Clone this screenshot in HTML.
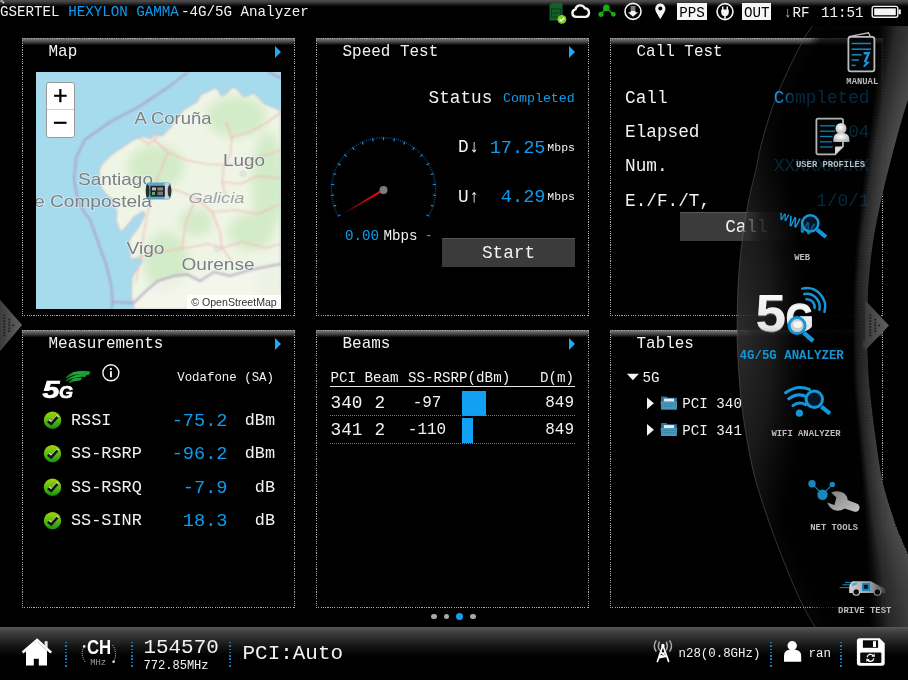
<!DOCTYPE html>
<html lang="en">
<head>
<meta charset="utf-8">
<title>GSERTEL HEXYLON GAMMA - 4G/5G Analyzer</title>
<style>
html,body{margin:0;padding:0;background:#000;}
html{width:908px;height:680px;overflow:hidden;}
body{width:908px;height:680px;position:relative;overflow:hidden;color:#f2f2f2;
  font-family:"Liberation Mono","DejaVu Sans Mono",monospace;font-size:14.19px;}
.t{position:absolute;white-space:pre;line-height:1;}
.b{color:#0d9df0;}
.g{color:#c8c8c8;}
.abs{position:absolute;}
.panel{position:absolute;width:273px;height:278px;
  background:
   repeating-linear-gradient(to right,#aea6a6 0,#aea6a6 0.887px,transparent 0.887px,transparent 1.7734px) 0 0/100% 1px no-repeat,
   repeating-linear-gradient(to right,#aea6a6 0,#aea6a6 0.887px,transparent 0.887px,transparent 1.7734px) 0 100%/100% 1px no-repeat,
   repeating-linear-gradient(to bottom,#aea6a6 0,#aea6a6 0.887px,transparent 0.887px,transparent 1.7734px) 0 0/1px 100% no-repeat,
   repeating-linear-gradient(to bottom,#aea6a6 0,#aea6a6 0.887px,transparent 0.887px,transparent 1.7734px) 100% 0/1px 100% no-repeat,
   linear-gradient(to bottom,#6a6a6a 0,#747474 1px,#5c5c5c 2.5px,#3c3c3c 4.5px,#1a1a1a 6px,#000 7.5px,#000 100%);}
.arr{position:absolute;width:0;height:0;border-left:6.5px solid #1fa9ef;
  border-top:6px solid transparent;border-bottom:6px solid transparent;}
#topbar{position:absolute;left:0;top:0;width:908px;height:23px;
  background:linear-gradient(to bottom,#4e4e4e 0,#444 1.5px,#2a2a2a 3.5px,#0c0c0c 5.5px,#000 7px);}
#botbar{position:absolute;left:0;top:627px;width:908px;height:53px;
  background:linear-gradient(to bottom,#5a5a5a 0,#474747 3px,#363636 8px,#262525 14px,#141313 20px,#060606 26px,#000 31px,#000 100%);}
.vsep{position:absolute;width:1.8px;background:repeating-linear-gradient(to bottom,#1878bc 0,#1878bc 1.5px,transparent 1.5px,transparent 3.3px);}
.btn{position:absolute;background:#3b3b3b;border-top:1px solid #555;box-sizing:border-box;}
.hsepd{position:absolute;height:0;border-top:1px dotted #777;}
.sans{font-family:"Liberation Sans","DejaVu Sans",sans-serif;}
</style>
</head>
<body>
<div id="root" style="position:absolute;left:0;top:0;width:908px;height:680px;overflow:hidden;will-change:transform;transform:translateZ(0);">

<div id="topbar"></div>
<svg class="abs" style="left:0;top:0;" width="8" height="6" viewBox="0 0 8 6"><path d="M0,1.2 H2.6 M2,0 V1.6" stroke="#eee" stroke-width="0.7" fill="none"/><circle cx="3.3" cy="2.5" r="1" fill="#ddd"/></svg>
<div class="t" style="left:0.0px;top:5.0px;font-size:14.19px;">GSERTEL <span class="b">HEXYLON GAMMA</span></div>
<div class="t" style="left:181.0px;top:5.0px;font-size:14.19px;">-</div>
<div class="t" style="left:189.5px;top:5.0px;font-size:14.19px;">4G/5G Analyzer</div>
<div class="panel" style="left:22px;top:38px;"></div>
<div class="t" style="left:48.5px;top:44.5px;font-size:15.96px;">Map</div>
<div class="arr" style="left:275px;top:46px;"></div>
<div class="panel" style="left:316px;top:38px;"></div>
<div class="t" style="left:342.5px;top:44.5px;font-size:15.96px;">Speed Test</div>
<div class="arr" style="left:569px;top:46px;"></div>
<div class="panel" style="left:610px;top:38px;"></div>
<div class="t" style="left:636.5px;top:44.5px;font-size:15.96px;">Call Test</div>
<div class="arr" style="left:863px;top:46px;"></div>
<div class="panel" style="left:22px;top:330px;"></div>
<div class="t" style="left:48.5px;top:336.5px;font-size:15.96px;">Measurements</div>
<div class="arr" style="left:275px;top:338px;"></div>
<div class="panel" style="left:316px;top:330px;"></div>
<div class="t" style="left:342.5px;top:336.5px;font-size:15.96px;">Beams</div>
<div class="arr" style="left:569px;top:338px;"></div>
<div class="panel" style="left:610px;top:330px;"></div>
<div class="t" style="left:636.5px;top:336.5px;font-size:15.96px;">Tables</div>
<div class="arr" style="left:863px;top:338px;"></div>
<div class="abs" style="left:23px;top:39px;width:272px;height:277px;">
  <svg class="abs" style="left:13px;top:33px;" width="245" height="237" viewBox="0 0 245 237">
    <defs>
      <filter id="bl1" x="-5%" y="-5%" width="110%" height="110%"><feGaussianBlur stdDeviation="0.9"/></filter>
      <filter id="bl2" x="-20%" y="-20%" width="140%" height="140%"><feGaussianBlur stdDeviation="5"/></filter>
      <filter id="bl3" x="-5%" y="-20%" width="110%" height="140%"><feGaussianBlur stdDeviation="0.55"/></filter>
      <clipPath id="landclip"><polygon points="245.0,38.6 236.0,35.0 228.0,31.5 222.0,25.0 217.6,21.0 212.0,24.0 207.0,24.5 202.0,18.0 196.4,14.8 191.0,21.0 185.8,24.5 182.0,18.0 178.7,15.7 171.0,20.0 164.6,22.7 161.0,29.8 154.0,34.0 147.0,38.6 140.0,47.0 135.0,55.0 130.0,59.5 126.4,63.9 120.0,62.5 114.0,66.5 107.0,64.5 99.9,66.8 94.0,70.0 88.0,74.2 80.0,79.5 73.4,84.5 67.0,91.0 63.5,97.0 63.0,105.0 64.6,114.0 68.0,120.0 72.0,124.0 76.4,127.0 79.0,134.0 80.8,140.4 80.0,149.0 83.0,156.0 85.0,160.4 91.0,154.0 98.0,145.0 107.4,139.3 109.0,143.0 105.0,150.0 102.5,155.5 96.0,163.6 92.8,170.0 94.0,178.0 94.5,187.9 100.0,186.0 105.8,186.5 106.0,190.0 99.3,199.2 96.0,205.7 95.5,216.0 95.3,225.0 97.7,231.6 98.5,237.0 245.0,237.0"/></clipPath>
    </defs>
    <rect width="245" height="237" fill="#a6dbee"/>
    <g filter="url(#bl1)">
      <polyline points="152.0,0.0 134.0,14.0 104.0,34.0 74.0,50.0 49.0,67.5 40.0,86.0 38.0,108.0 42.0,128.0 48.0,140.0 54.0,147.4 62.0,170.0 70.2,192.7 75.0,212.0 76.7,230.0 97.7,230.8" fill="none" stroke="#a9a9c8" stroke-width="2.2" stroke-linejoin="round"/>
      <polyline points="76.4,229 75.6,237" fill="none" stroke="#a9a9c8" stroke-width="2.2"/>
      <polyline points="245,6 232,0" fill="none" stroke="#a9a9c8" stroke-width="2"/>
      <polygon points="245.0,38.6 236.0,35.0 228.0,31.5 222.0,25.0 217.6,21.0 212.0,24.0 207.0,24.5 202.0,18.0 196.4,14.8 191.0,21.0 185.8,24.5 182.0,18.0 178.7,15.7 171.0,20.0 164.6,22.7 161.0,29.8 154.0,34.0 147.0,38.6 140.0,47.0 135.0,55.0 130.0,59.5 126.4,63.9 120.0,62.5 114.0,66.5 107.0,64.5 99.9,66.8 94.0,70.0 88.0,74.2 80.0,79.5 73.4,84.5 67.0,91.0 63.5,97.0 63.0,105.0 64.6,114.0 68.0,120.0 72.0,124.0 76.4,127.0 79.0,134.0 80.8,140.4 80.0,149.0 83.0,156.0 85.0,160.4 91.0,154.0 98.0,145.0 107.4,139.3 109.0,143.0 105.0,150.0 102.5,155.5 96.0,163.6 92.8,170.0 94.0,178.0 94.5,187.9 100.0,186.0 105.8,186.5 106.0,190.0 99.3,199.2 96.0,205.7 95.5,216.0 95.3,225.0 97.7,231.6 98.5,237.0 245.0,237.0" fill="#eef5e4" stroke="#c9c0d6" stroke-width="1.2"/>
      <g clip-path="url(#landclip)">
        <g filter="url(#bl2)" fill="#d3ebc8">
          <ellipse cx="200" cy="45" rx="30" ry="20"/>
          <ellipse cx="120" cy="95" rx="28" ry="22"/>
          <ellipse cx="232" cy="110" rx="16" ry="50"/>
          <ellipse cx="130" cy="190" rx="22" ry="30"/>
          <ellipse cx="215" cy="160" rx="22" ry="18"/>
          <ellipse cx="160" cy="150" rx="16" ry="14"/>
          <ellipse cx="236" cy="215" rx="14" ry="20"/>
        </g>
        <polygon points="97.7,232.0 110.6,219.6 122.0,209.9 138.1,205.0 151.0,203.4 164.0,210.0 178.0,201.0 194.0,205.0 214.0,199.0 245.0,193.0 245,237 98,237" fill="#f6f4ee" opacity="0.75"/>
        <polyline points="97.7,231.0 110.6,218.6 122.0,208.9 138.1,204.0 151.0,202.4 164.0,209.0 178.0,200.0 194.0,204.0 214.0,198.0 245.0,192.0" fill="none" stroke="#b7a9c4" stroke-width="2"/>
        <g fill="none" stroke="#f3aeb0" stroke-width="1.1" stroke-linejoin="round">
          <polyline points="118,68 132,80 150,88 170,92 188,93 206,92 224,85 245,78"/>
          <polyline points="132,80 124,100 118,116 112,140 108,160 104,185 100,210"/>
          <polyline points="190,50 196,66 194,84 188,93 186,110 190,125"/>
          <polyline points="194,66 214,60 232,50 245,40"/>
          <polyline points="118,116 140,118 160,126 176,140 184,160 186,176 196,190"/>
          <polyline points="186,110 204,112 222,104 245,106"/>
          <polyline points="104,185 124,180 150,176 172,172 186,176 206,170 230,176 245,172"/>
          <polyline points="160,126 150,150 146,176"/>
          <polyline points="176,140 200,138 222,142 245,132"/>
          <polyline points="100,64 112,72 118,68 126,60"/>
        </g>
        <circle cx="207" cy="101.5" r="2.2" fill="#fff" stroke="#9a9a9a" stroke-width="0.8"/>
        <circle cx="181.6" cy="176.8" r="2.2" fill="#fff" stroke="#9a9a9a" stroke-width="0.8"/>
      </g>
    </g>
    <g filter="url(#bl3)" font-family="'Liberation Sans','DejaVu Sans',sans-serif" fill="#7b7f84" stroke="#f4f7f4" stroke-opacity="0.55" stroke-width="1.6" paint-order="stroke" font-size="16.5">
      <text x="98.5" y="52" textLength="77" lengthAdjust="spacingAndGlyphs">A Coruña</text>
      <text x="187" y="94" textLength="42" lengthAdjust="spacingAndGlyphs">Lugo</text>
      <text x="42" y="112.5" textLength="75" lengthAdjust="spacingAndGlyphs">Santiago</text>
      <text x="-2" y="134.5" textLength="118" lengthAdjust="spacingAndGlyphs">e Compostela</text>
      <text x="152.5" y="131" font-style="italic" fill="#a3a3a6" font-size="15" textLength="56" lengthAdjust="spacingAndGlyphs">Galicia</text>
      <text x="90.5" y="181.5" textLength="38" lengthAdjust="spacingAndGlyphs">Vigo</text>
      <text x="145.5" y="198" textLength="73" lengthAdjust="spacingAndGlyphs">Ourense</text>
    </g>
  </svg>

  <div class="abs" style="left:23px;top:42.5px;width:26.6px;height:54.6px;background:#fff;border:1px solid #9b9b9b;border-radius:3px;">
    <div class="abs" style="left:0;top:26.8px;width:26.6px;height:1px;background:#cfcfcf;"></div>
    <div class="abs sans" style="left:0;top:0;width:26.6px;height:27px;text-align:center;font-size:25px;line-height:25px;color:#000;-webkit-text-stroke:0.35px #000;">+</div>
    <div class="abs sans" style="left:0;top:28px;width:26.6px;height:27px;text-align:center;font-size:25px;line-height:23.4px;color:#000;-webkit-text-stroke:0.35px #000;">&#8722;</div>
  </div>
  <div class="abs sans" style="left:164px;top:256px;width:94px;height:14px;background:rgba(255,255,255,0.92);font-size:10.6px;line-height:14px;color:#333;text-align:center;white-space:pre;">&#169; OpenStreetMap</div>
</div>
<div class="t" style="left:428.5px;top:89.8px;font-size:17.73px;">Status</div>
<div class="t b" style="right:333.2px;top:91.7px;font-size:13.3px;">Completed</div>
<div class="t" style="left:458.0px;top:139.3px;font-size:17.73px;">D&#8595;</div>
<div class="t b" style="right:362.5px;top:138.9px;font-size:18.62px;">17.25</div>
<div class="t" style="right:333.0px;top:141.8px;font-size:11.53px;">Mbps</div>
<div class="t" style="left:458.0px;top:188.8px;font-size:17.73px;">U&#8593;</div>
<div class="t b" style="right:362.5px;top:188.4px;font-size:18.62px;">4.29</div>
<div class="t" style="right:333.0px;top:191.2px;font-size:11.53px;">Mbps</div>
<div class="t b" style="left:345.0px;top:228.8px;font-size:14.19px;">0.00</div>
<div class="t" style="left:383.5px;top:228.8px;font-size:14.19px;">Mbps</div>
<div class="t b" style="left:424.5px;top:228.8px;font-size:14.19px;">-</div>
<div class="btn" style="left:442px;top:238px;width:133px;height:29px;"></div>
<div class="t" style="left:358.5px;width:300px;text-align:center;top:244.8px;font-size:17.73px;">Start</div>
<div class="t" style="left:625.0px;top:89.8px;font-size:17.73px;">Call</div>
<div class="t b" style="right:38.5px;top:89.8px;font-size:17.73px;">Completed</div>
<div class="t" style="left:625.0px;top:123.5px;font-size:17.73px;">Elapsed</div>
<div class="t b" style="right:38.5px;top:123.5px;font-size:17.73px;">04</div>
<div class="t" style="left:625.0px;top:157.5px;font-size:17.73px;">Num.</div>
<div class="t b" style="right:38.5px;top:157.5px;font-size:17.73px;">XXXXXXXXX</div>
<div class="t" style="left:625.0px;top:192.8px;font-size:17.73px;">E./F./T,</div>
<div class="t b" style="right:38.5px;top:192.8px;font-size:17.73px;">1/0/1</div>
<div class="btn" style="left:680px;top:212px;width:133px;height:29px;background:linear-gradient(to right,#3b3b3b 0,#3b3b3b 66px,#1a1a1a 96px,#000 120px);border-top:none;"></div><div class="abs" style="left:680px;top:212px;width:70px;height:1px;background:#555;"></div>
<div class="t" style="left:596.5px;width:300px;text-align:center;top:218.8px;font-size:17.73px;">Call</div>
<div class="t" style="right:634.0px;top:372.1px;font-size:12.41px;">Vodafone (SA)</div>
<div class="t" style="left:71.0px;top:412.6px;font-size:16.85px;">RSSI</div>
<div class="t b" style="right:680.5px;top:411.9px;font-size:18.62px;">-75.2</div>
<div class="t" style="right:633.0px;top:412.6px;font-size:16.85px;">dBm</div>
<div class="t" style="left:71.0px;top:446.1px;font-size:16.85px;">SS-RSRP</div>
<div class="t b" style="right:680.5px;top:445.4px;font-size:18.62px;">-96.2</div>
<div class="t" style="right:633.0px;top:446.1px;font-size:16.85px;">dBm</div>
<div class="t" style="left:71.0px;top:479.6px;font-size:16.85px;">SS-RSRQ</div>
<div class="t b" style="right:680.5px;top:478.9px;font-size:18.62px;">-7.9</div>
<div class="t" style="right:633.0px;top:479.6px;font-size:16.85px;">dB</div>
<div class="t" style="left:71.0px;top:513.1px;font-size:16.85px;">SS-SINR</div>
<div class="t b" style="right:680.5px;top:512.4px;font-size:18.62px;">18.3</div>
<div class="t" style="right:633.0px;top:513.1px;font-size:16.85px;">dB</div>
<div class="t" style="left:330.5px;top:371.3px;font-size:14.19px;">PCI Beam</div>
<div class="t" style="left:408.0px;top:371.3px;font-size:14.19px;">SS-RSRP(dBm)</div>
<div class="t" style="right:334.0px;top:371.3px;font-size:14.19px;">D(m)</div>
<div class="abs" style="left:330px;top:386px;width:245px;height:1px;background:#e8e8e8;"></div>
<div class="t" style="left:330.5px;top:394.8px;font-size:17.73px;">340</div>
<div class="t" style="left:374.5px;top:394.8px;font-size:17.73px;">2</div>
<div class="t" style="left:277.0px;width:300px;text-align:center;top:395.5px;font-size:15.96px;">-97</div>
<div class="abs" style="left:462px;top:390.5px;width:24px;height:25.5px;background:#12a1f2;"></div>
<div class="t" style="right:334.0px;top:395.5px;font-size:15.96px;">849</div>
<div class="hsepd" style="left:330px;top:415.0px;width:245px;"></div>
<div class="t" style="left:330.5px;top:421.8px;font-size:17.73px;">341</div>
<div class="t" style="left:374.5px;top:421.8px;font-size:17.73px;">2</div>
<div class="t" style="left:277.0px;width:300px;text-align:center;top:422.5px;font-size:15.96px;">-110</div>
<div class="abs" style="left:462px;top:417.5px;width:11px;height:25.5px;background:#12a1f2;"></div>
<div class="t" style="right:334.0px;top:422.5px;font-size:15.96px;">849</div>
<div class="hsepd" style="left:330px;top:442.5px;width:245px;"></div>
<div class="t" style="left:642.5px;top:370.8px;font-size:14.19px;">5G</div>
<div class="t" style="left:682.3px;top:397.1px;font-size:14.19px;">PCI 340</div>
<div class="t" style="left:682.3px;top:423.6px;font-size:14.19px;">PCI 341</div>
<div class="abs" style="left:431.4px;top:613.6999999999999px;width:5.2px;height:5.2px;border-radius:50%;background:#a8a8a8;"></div>
<div class="abs" style="left:443.9px;top:613.6999999999999px;width:5.2px;height:5.2px;border-radius:50%;background:#a8a8a8;"></div>
<div class="abs" style="left:456.1px;top:612.8px;width:7.0px;height:7.0px;border-radius:50%;background:#12a1f2;"></div>
<div class="abs" style="left:470.4px;top:613.6999999999999px;width:5.2px;height:5.2px;border-radius:50%;background:#a8a8a8;"></div>
<div id="botbar"></div>
<div class="vsep" style="left:65.3px;top:641.5px;height:25.5px;"></div>
<div class="vsep" style="left:131px;top:641.5px;height:25.5px;"></div>
<div class="vsep" style="left:229.4px;top:641.5px;height:25.5px;"></div>
<div class="vsep" style="left:770px;top:641.5px;height:25.5px;"></div>
<div class="vsep" style="left:840px;top:641.5px;height:25.5px;"></div>
<div class="t" style="left:143.5px;top:638.3px;font-size:20.9px;">154570</div>
<div class="t" style="left:143.5px;top:660.3px;font-size:12.06px;">772.85MHz</div>
<div class="t" style="left:242.5px;top:643.8px;font-size:20.95px;">PCI:Auto</div>
<div class="t" style="left:678.5px;top:647.6px;font-size:12.41px;">n28(0.8GHz)</div>
<div class="t" style="left:808.5px;top:647.6px;font-size:12.41px;">ran</div>
<svg class="abs" style="left:0;top:0;" width="908" height="680" viewBox="0 0 908 680"><line x1="340.5" y1="214.8" x2="337.7" y2="216.3" stroke="#1189dc" stroke-width="1.3"/>
<line x1="338.0" y1="213.7" x2="336.6" y2="214.4" stroke="#105a92" stroke-width="0.8"/>
<line x1="337.1" y1="211.7" x2="335.6" y2="212.4" stroke="#105a92" stroke-width="0.8"/>
<line x1="336.2" y1="209.8" x2="334.7" y2="210.4" stroke="#105a92" stroke-width="0.8"/>
<line x1="335.4" y1="207.8" x2="333.9" y2="208.3" stroke="#105a92" stroke-width="0.8"/>
<line x1="336.2" y1="205.3" x2="333.2" y2="206.2" stroke="#1189dc" stroke-width="1.3"/>
<line x1="334.1" y1="203.7" x2="332.5" y2="204.1" stroke="#105a92" stroke-width="0.8"/>
<line x1="333.6" y1="201.6" x2="332.0" y2="202.0" stroke="#105a92" stroke-width="0.8"/>
<line x1="333.1" y1="199.5" x2="331.5" y2="199.8" stroke="#105a92" stroke-width="0.8"/>
<line x1="332.8" y1="197.4" x2="331.2" y2="197.6" stroke="#105a92" stroke-width="0.8"/>
<line x1="334.1" y1="195.1" x2="330.9" y2="195.4" stroke="#1189dc" stroke-width="1.3"/>
<line x1="332.3" y1="193.1" x2="330.7" y2="193.2" stroke="#105a92" stroke-width="0.8"/>
<line x1="332.2" y1="191.0" x2="330.6" y2="191.0" stroke="#105a92" stroke-width="0.8"/>
<line x1="332.2" y1="188.8" x2="330.6" y2="188.8" stroke="#105a92" stroke-width="0.8"/>
<line x1="332.3" y1="186.7" x2="330.7" y2="186.6" stroke="#105a92" stroke-width="0.8"/>
<line x1="334.1" y1="184.7" x2="330.9" y2="184.4" stroke="#1189dc" stroke-width="1.3"/>
<line x1="332.8" y1="182.4" x2="331.2" y2="182.2" stroke="#105a92" stroke-width="0.8"/>
<line x1="333.1" y1="180.3" x2="331.5" y2="180.0" stroke="#105a92" stroke-width="0.8"/>
<line x1="333.6" y1="178.2" x2="332.0" y2="177.8" stroke="#105a92" stroke-width="0.8"/>
<line x1="334.1" y1="176.1" x2="332.5" y2="175.7" stroke="#105a92" stroke-width="0.8"/>
<line x1="336.2" y1="174.5" x2="333.2" y2="173.6" stroke="#1189dc" stroke-width="1.3"/>
<line x1="335.4" y1="172.0" x2="333.9" y2="171.5" stroke="#105a92" stroke-width="0.8"/>
<line x1="336.2" y1="170.0" x2="334.7" y2="169.4" stroke="#105a92" stroke-width="0.8"/>
<line x1="337.1" y1="168.1" x2="335.6" y2="167.4" stroke="#105a92" stroke-width="0.8"/>
<line x1="338.0" y1="166.1" x2="336.6" y2="165.4" stroke="#105a92" stroke-width="0.8"/>
<line x1="340.5" y1="165.1" x2="337.7" y2="163.4" stroke="#1189dc" stroke-width="1.3"/>
<line x1="340.2" y1="162.4" x2="338.8" y2="161.6" stroke="#105a92" stroke-width="0.8"/>
<line x1="341.4" y1="160.6" x2="340.1" y2="159.7" stroke="#105a92" stroke-width="0.8"/>
<line x1="342.6" y1="158.9" x2="341.4" y2="157.9" stroke="#105a92" stroke-width="0.8"/>
<line x1="344.0" y1="157.2" x2="342.7" y2="156.2" stroke="#105a92" stroke-width="0.8"/>
<line x1="346.6" y1="156.6" x2="344.2" y2="154.5" stroke="#1189dc" stroke-width="1.3"/>
<line x1="346.8" y1="154.0" x2="345.7" y2="152.9" stroke="#105a92" stroke-width="0.8"/>
<line x1="348.4" y1="152.5" x2="347.3" y2="151.3" stroke="#105a92" stroke-width="0.8"/>
<line x1="350.0" y1="151.1" x2="348.9" y2="149.9" stroke="#105a92" stroke-width="0.8"/>
<line x1="351.6" y1="149.7" x2="350.6" y2="148.4" stroke="#105a92" stroke-width="0.8"/>
<line x1="354.3" y1="149.7" x2="352.4" y2="147.1" stroke="#1189dc" stroke-width="1.3"/>
<line x1="355.1" y1="147.2" x2="354.2" y2="145.8" stroke="#105a92" stroke-width="0.8"/>
<line x1="356.9" y1="146.0" x2="356.1" y2="144.7" stroke="#105a92" stroke-width="0.8"/>
<line x1="358.8" y1="144.9" x2="358.0" y2="143.5" stroke="#105a92" stroke-width="0.8"/>
<line x1="360.7" y1="143.9" x2="360.0" y2="142.5" stroke="#105a92" stroke-width="0.8"/>
<line x1="363.3" y1="144.5" x2="362.0" y2="141.6" stroke="#1189dc" stroke-width="1.3"/>
<line x1="364.6" y1="142.2" x2="364.0" y2="140.7" stroke="#105a92" stroke-width="0.8"/>
<line x1="366.6" y1="141.5" x2="366.1" y2="139.9" stroke="#105a92" stroke-width="0.8"/>
<line x1="368.7" y1="140.8" x2="368.2" y2="139.3" stroke="#105a92" stroke-width="0.8"/>
<line x1="370.7" y1="140.2" x2="370.3" y2="138.7" stroke="#105a92" stroke-width="0.8"/>
<line x1="373.2" y1="141.3" x2="372.5" y2="138.2" stroke="#1189dc" stroke-width="1.3"/>
<line x1="374.9" y1="139.3" x2="374.7" y2="137.7" stroke="#105a92" stroke-width="0.8"/>
<line x1="377.1" y1="139.0" x2="376.9" y2="137.4" stroke="#105a92" stroke-width="0.8"/>
<line x1="379.2" y1="138.8" x2="379.1" y2="137.2" stroke="#105a92" stroke-width="0.8"/>
<line x1="381.4" y1="138.6" x2="381.3" y2="137.0" stroke="#105a92" stroke-width="0.8"/>
<line x1="383.5" y1="140.2" x2="383.5" y2="137.0" stroke="#1189dc" stroke-width="1.3"/>
<line x1="385.6" y1="138.6" x2="385.7" y2="137.0" stroke="#105a92" stroke-width="0.8"/>
<line x1="387.8" y1="138.8" x2="387.9" y2="137.2" stroke="#105a92" stroke-width="0.8"/>
<line x1="389.9" y1="139.0" x2="390.1" y2="137.4" stroke="#105a92" stroke-width="0.8"/>
<line x1="392.1" y1="139.3" x2="392.3" y2="137.7" stroke="#105a92" stroke-width="0.8"/>
<line x1="393.8" y1="141.3" x2="394.5" y2="138.2" stroke="#1189dc" stroke-width="1.3"/>
<line x1="396.3" y1="140.2" x2="396.7" y2="138.7" stroke="#105a92" stroke-width="0.8"/>
<line x1="398.3" y1="140.8" x2="398.8" y2="139.3" stroke="#105a92" stroke-width="0.8"/>
<line x1="400.4" y1="141.5" x2="400.9" y2="139.9" stroke="#105a92" stroke-width="0.8"/>
<line x1="402.4" y1="142.2" x2="403.0" y2="140.7" stroke="#105a92" stroke-width="0.8"/>
<line x1="403.7" y1="144.5" x2="405.0" y2="141.6" stroke="#1189dc" stroke-width="1.3"/>
<line x1="406.3" y1="143.9" x2="407.0" y2="142.5" stroke="#105a92" stroke-width="0.8"/>
<line x1="408.2" y1="144.9" x2="409.0" y2="143.5" stroke="#105a92" stroke-width="0.8"/>
<line x1="410.1" y1="146.0" x2="410.9" y2="144.7" stroke="#105a92" stroke-width="0.8"/>
<line x1="411.9" y1="147.2" x2="412.8" y2="145.8" stroke="#105a92" stroke-width="0.8"/>
<line x1="412.7" y1="149.7" x2="414.6" y2="147.1" stroke="#1189dc" stroke-width="1.3"/>
<line x1="415.4" y1="149.7" x2="416.4" y2="148.4" stroke="#105a92" stroke-width="0.8"/>
<line x1="417.0" y1="151.1" x2="418.1" y2="149.9" stroke="#105a92" stroke-width="0.8"/>
<line x1="418.6" y1="152.5" x2="419.7" y2="151.3" stroke="#105a92" stroke-width="0.8"/>
<line x1="420.2" y1="154.0" x2="421.3" y2="152.9" stroke="#105a92" stroke-width="0.8"/>
<line x1="420.4" y1="156.6" x2="422.8" y2="154.5" stroke="#1189dc" stroke-width="1.3"/>
<line x1="423.0" y1="157.2" x2="424.3" y2="156.2" stroke="#105a92" stroke-width="0.8"/>
<line x1="424.4" y1="158.9" x2="425.6" y2="157.9" stroke="#105a92" stroke-width="0.8"/>
<line x1="425.6" y1="160.6" x2="426.9" y2="159.7" stroke="#105a92" stroke-width="0.8"/>
<line x1="426.8" y1="162.4" x2="428.2" y2="161.6" stroke="#105a92" stroke-width="0.8"/>
<line x1="426.5" y1="165.0" x2="429.3" y2="163.4" stroke="#1189dc" stroke-width="1.3"/>
<line x1="429.0" y1="166.1" x2="430.4" y2="165.4" stroke="#105a92" stroke-width="0.8"/>
<line x1="429.9" y1="168.1" x2="431.4" y2="167.4" stroke="#105a92" stroke-width="0.8"/>
<line x1="430.8" y1="170.0" x2="432.3" y2="169.4" stroke="#105a92" stroke-width="0.8"/>
<line x1="431.6" y1="172.0" x2="433.1" y2="171.5" stroke="#105a92" stroke-width="0.8"/>
<line x1="430.8" y1="174.5" x2="433.8" y2="173.6" stroke="#1189dc" stroke-width="1.3"/>
<line x1="432.9" y1="176.1" x2="434.5" y2="175.7" stroke="#105a92" stroke-width="0.8"/>
<line x1="433.4" y1="178.2" x2="435.0" y2="177.8" stroke="#105a92" stroke-width="0.8"/>
<line x1="433.9" y1="180.3" x2="435.5" y2="180.0" stroke="#105a92" stroke-width="0.8"/>
<line x1="434.2" y1="182.4" x2="435.8" y2="182.2" stroke="#105a92" stroke-width="0.8"/>
<line x1="432.9" y1="184.7" x2="436.1" y2="184.4" stroke="#1189dc" stroke-width="1.3"/>
<line x1="434.7" y1="186.7" x2="436.3" y2="186.6" stroke="#105a92" stroke-width="0.8"/>
<line x1="434.8" y1="188.8" x2="436.4" y2="188.8" stroke="#105a92" stroke-width="0.8"/>
<line x1="434.8" y1="191.0" x2="436.4" y2="191.0" stroke="#105a92" stroke-width="0.8"/>
<line x1="434.7" y1="193.1" x2="436.3" y2="193.2" stroke="#105a92" stroke-width="0.8"/>
<line x1="432.9" y1="195.1" x2="436.1" y2="195.4" stroke="#1189dc" stroke-width="1.3"/>
<line x1="434.2" y1="197.4" x2="435.8" y2="197.6" stroke="#105a92" stroke-width="0.8"/>
<line x1="433.9" y1="199.5" x2="435.5" y2="199.8" stroke="#105a92" stroke-width="0.8"/>
<line x1="433.4" y1="201.6" x2="435.0" y2="202.0" stroke="#105a92" stroke-width="0.8"/>
<line x1="432.9" y1="203.7" x2="434.5" y2="204.1" stroke="#105a92" stroke-width="0.8"/>
<line x1="430.8" y1="205.3" x2="433.8" y2="206.2" stroke="#1189dc" stroke-width="1.3"/>
<line x1="431.6" y1="207.8" x2="433.1" y2="208.3" stroke="#105a92" stroke-width="0.8"/>
<line x1="430.8" y1="209.8" x2="432.3" y2="210.4" stroke="#105a92" stroke-width="0.8"/>
<line x1="429.9" y1="211.7" x2="431.4" y2="212.4" stroke="#105a92" stroke-width="0.8"/>
<line x1="429.0" y1="213.7" x2="430.4" y2="214.4" stroke="#105a92" stroke-width="0.8"/>
<line x1="426.5" y1="214.8" x2="429.3" y2="216.3" stroke="#1189dc" stroke-width="1.3"/>
<polygon points="343.1,213.7 382.8,188.8 384.2,191.0" fill="#d40d0d"/>
<circle cx="383.5" cy="189.9" r="4" fill="#7c7c7c"/>
<!-- sim -->
<path d="M549.5,5 L552.5,2.8 H562.5 V20.6 H549.5 Z" fill="#15602a"/>
<rect x="551.5" y="9" width="9" height="8" fill="none" stroke="#0c3a18" stroke-width="1"/>
<line x1="551.5" y1="13" x2="560.5" y2="13" stroke="#0c3a18" stroke-width="1"/>
<circle cx="561.9" cy="19.3" r="4.4" fill="#7ed321"/>
<polyline points="559.6,19.3 561.3,21 564.3,17.6" fill="none" stroke="#fff" stroke-width="1.4"/>
<!-- cloud -->
<path d="M576,16.9 a3.8,3.8 0 0 1 -0.6,-7.5 a5,5 0 0 1 9.4,-1.2 a4.4,4.4 0 0 1 0.7,8.7 Z" fill="#000" stroke="#f4f4f4" stroke-width="2.4" stroke-linejoin="round"/>
<!-- nodes -->
<g stroke="#17ad17" stroke-width="1.4" fill="#17ad17">
<line x1="606.3" y1="7.9" x2="601" y2="14.3"/><line x1="606.3" y1="7.9" x2="613.4" y2="14.3"/>
<circle cx="606.3" cy="7.9" r="2.6"/><circle cx="601" cy="14.3" r="1.9"/><circle cx="613.4" cy="14.3" r="1.7"/></g>
<!-- download -->
<circle cx="633" cy="11.4" r="8" fill="none" stroke="#f4f4f4" stroke-width="1.6"/>
<path d="M630.6,6.4 h4.8 v1.2 h-4.8 z M630.6,8.4 h4.8 v1.2 h-4.8 z M630.6,10.4 h4.8 v1.8 h2.6 l-5,4.6 l-5,-4.6 h2.6 z" fill="#f4f4f4"/>
<!-- pin -->
<path d="M660.3,19.3 C658,15 655.2,12 655.2,8.6 a5.1,5.1 0 0 1 10.2,0 C665.4,12 662.6,15 660.3,19.3 Z" fill="#f4f4f4"/>
<circle cx="660.3" cy="8.5" r="2" fill="#000"/>
<!-- plug -->
<circle cx="725" cy="11.6" r="8" fill="none" stroke="#f4f4f4" stroke-width="1.6"/>
<path d="M722,6.5 h1.5 v3 h3 v-3 h1.5 v3 h0.8 v3 a3.8,3.8 0 0 1 -3,3.6 v2.6 h-1.6 v-2.6 a3.8,3.8 0 0 1 -3,-3.6 v-3 h0.8 z" fill="#f4f4f4"/>
<!-- battery -->
<rect x="872.2" y="6.4" width="25.6" height="10.8" rx="2" fill="none" stroke="#f4f4f4" stroke-width="1.4"/>
<rect x="874.2" y="8.4" width="21.6" height="6.8" fill="#f4f4f4"/>
<rect x="898.6" y="9.4" width="2.2" height="4.8" fill="#f4f4f4"/>

<defs><linearGradient id="gck" x1="0" y1="0" x2="0" y2="1"><stop offset="0" stop-color="#a4d400"/><stop offset="0.5" stop-color="#5cba10"/><stop offset="1" stop-color="#149018"/></linearGradient>
<linearGradient id="ggr" x1="0" y1="1" x2="1" y2="0"><stop offset="0" stop-color="#0a5a10"/><stop offset="0.55" stop-color="#1fae3a"/><stop offset="1" stop-color="#10962a"/></linearGradient></defs>
<text x="42.6" y="397.8" font-family="'Liberation Sans','DejaVu Sans',sans-serif" font-weight="bold" font-style="italic" font-size="24.6" fill="#fff" stroke="#fff" stroke-width="0.7" textLength="17" lengthAdjust="spacingAndGlyphs">5</text>
<text x="59" y="397.8" font-family="'Liberation Sans','DejaVu Sans',sans-serif" font-weight="bold" font-style="italic" font-size="17" fill="#fff" stroke="#fff" stroke-width="0.7" textLength="14" lengthAdjust="spacingAndGlyphs">G</text>
<path d="M65.8,377 Q75,368.4 90.6,371.6 L88.6,375.2 Q76,372 66.6,378.4 Z" fill="url(#ggr)"/>
<path d="M65.4,380.4 Q75.5,372.6 87.4,373.8 L85.4,377 Q76,376 66.2,381.6 Z" fill="url(#ggr)"/>
<path d="M68.6,382 Q74.6,376.6 82.4,377.8 L80.4,380.6 Q75,380 69.6,383.2 Z" fill="url(#ggr)"/>
<circle cx="110.9" cy="372.8" r="8" fill="none" stroke="#f4f4f4" stroke-width="1.4"/>
<circle cx="110.9" cy="368.9" r="1.15" fill="#f4f4f4"/>
<rect x="110" y="371.2" width="1.9" height="6" fill="#f4f4f4"/>
<circle cx="52.5" cy="420.2" r="8.7" fill="url(#gck)"/>
<polyline points="48.6,420.4 51.7,422.9 57.8,415.9" fill="none" stroke="#f4f4f4" stroke-width="2.6" stroke-linejoin="round"/>
<polyline points="47.9,421.2 51.3,423.9 57.5,416.9" fill="none" stroke="#111" stroke-width="2.6" stroke-linejoin="round"/>
<circle cx="52.5" cy="453.7" r="8.7" fill="url(#gck)"/>
<polyline points="48.6,453.9 51.7,456.4 57.8,449.4" fill="none" stroke="#f4f4f4" stroke-width="2.6" stroke-linejoin="round"/>
<polyline points="47.9,454.7 51.3,457.4 57.5,450.4" fill="none" stroke="#111" stroke-width="2.6" stroke-linejoin="round"/>
<circle cx="52.5" cy="487.2" r="8.7" fill="url(#gck)"/>
<polyline points="48.6,487.4 51.7,489.9 57.8,482.9" fill="none" stroke="#f4f4f4" stroke-width="2.6" stroke-linejoin="round"/>
<polyline points="47.9,488.2 51.3,490.9 57.5,483.9" fill="none" stroke="#111" stroke-width="2.6" stroke-linejoin="round"/>
<circle cx="52.5" cy="520.7" r="8.7" fill="url(#gck)"/>
<polyline points="48.6,520.9000000000001 51.7,523.4000000000001 57.8,516.4000000000001" fill="none" stroke="#f4f4f4" stroke-width="2.6" stroke-linejoin="round"/>
<polyline points="47.9,521.7 51.3,524.4000000000001 57.5,517.4000000000001" fill="none" stroke="#111" stroke-width="2.6" stroke-linejoin="round"/>
<polygon points="626.9,373.8 638.9,373.8 632.9,380.2" fill="#f4f4f4"/>
<polygon points="647,397.4 653.9,403.3 647,409.2" fill="#f4f4f4"/>
<polygon points="647,423.9 653.9,429.8 647,435.7" fill="#f4f4f4"/>
<path d="M661.1,396.4 h5.4 l1.4,1.4 h9 v11.6 h-15.8 z" fill="#2f7496"/>
<rect x="663.9000000000001" y="398.6" width="10.2" height="3.2" fill="#e4eef2"/>
<path d="M660.6,401.6 h16.6 l-0.6,7.9 h-15.4 z" fill="#4a97bb"/>
<path d="M661.7,403.8 h14.4 M661.9000000000001,406.2 h14" stroke="#2f7496" stroke-width="0.9" stroke-dasharray="1.2 1"/>
<path d="M661.1,422.9 h5.4 l1.4,1.4 h9 v11.6 h-15.8 z" fill="#2f7496"/>
<rect x="663.9000000000001" y="425.1" width="10.2" height="3.2" fill="#e4eef2"/>
<path d="M660.6,428.1 h16.6 l-0.6,7.9 h-15.4 z" fill="#4a97bb"/>
<path d="M661.7,430.3 h14.4 M661.9000000000001,432.7 h14" stroke="#2f7496" stroke-width="0.9" stroke-dasharray="1.2 1"/>

<rect x="146.2" y="182.4" width="24.6" height="17" rx="3" fill="#5aa6c6"/>
<rect x="164.5" y="183" width="4.6" height="15.8" fill="#c9d2d6"/>
<ellipse cx="147.6" cy="191" rx="1.9" ry="6.6" fill="#2b2b2b"/>
<ellipse cx="169.6" cy="191" rx="1.9" ry="6" fill="#333"/>
<rect x="150.4" y="185.8" width="14.4" height="10.8" fill="#1e2022"/>
<rect x="152" y="187.4" width="4" height="3" fill="#bbb"/><rect x="157.4" y="187.4" width="5.6" height="3" fill="#8a8a8a"/>
<rect x="152" y="192" width="3" height="3" fill="#6a6"/><rect x="157.4" y="191.6" width="5.6" height="3.6" fill="#777"/>
</svg>
<div class="abs" style="left:677.3px;top:2.8px;width:29.4px;height:17.6px;background:#f6f6f6;"></div>
<div class="t" style="left:542.0px;width:300px;text-align:center;top:5.6px;font-size:14.19px;color:#000;">PPS</div>
<div class="abs" style="left:742px;top:2.8px;width:29.4px;height:17.6px;background:#f6f6f6;"></div>
<div class="t" style="left:606.7px;width:300px;text-align:center;top:5.6px;font-size:14.19px;color:#000;">OUT</div>
<div class="t" style="left:783.6px;top:5.6px;font-size:14.19px;color:#b8b8b8;">&#8595;</div>
<div class="t" style="left:792.6px;top:5.6px;font-size:14.19px;">RF</div>
<div class="t" style="left:821.0px;top:5.6px;font-size:14.19px;">11:51</div>

<svg class="abs" style="left:0;top:0;" width="908" height="680" viewBox="0 0 908 680">
<defs>
  <clipPath id="dockclip"><path d="M812.3,26.0 C810.8,28.3 807.5,32.2 803.4,39.8 C799.3,47.4 792.3,61.3 787.5,71.6 C782.7,81.8 778.1,92.4 774.6,101.3 C771.1,110.2 769.2,116.8 766.7,125.1 C764.2,133.4 761.5,143.5 759.7,150.9 C757.9,158.3 757.8,161.4 756.0,169.4 C754.2,177.4 751.0,189.0 749.0,198.8 C747.0,208.6 745.5,218.2 744.0,228.0 C742.5,237.8 741.2,247.8 740.2,257.6 C739.2,267.4 738.5,277.2 738.0,287.0 C737.5,296.8 737.3,306.8 737.2,316.5 C737.1,326.2 737.0,335.2 737.3,345.0 C737.6,354.8 738.3,365.3 739.0,375.0 C739.7,384.7 740.2,392.2 741.5,403.0 C742.8,413.8 744.6,427.2 747.0,440.0 C749.4,452.8 751.4,464.9 755.6,480.0 C759.8,495.1 766.0,513.8 772.1,530.7 C778.2,547.6 786.7,568.6 792.0,581.5 C797.3,594.4 800.3,600.4 804.1,608.0 C807.9,615.6 813.2,623.8 815.0,627.0 L925,627 L925,590 C922.2,583.8 912.9,563.8 908.0,552.8 C903.1,541.8 900.0,536.1 895.7,524.0 C891.4,511.9 886.0,496.5 882.4,480.0 C878.8,463.5 876.2,441.7 874.0,425.0 C871.8,408.3 870.1,395.0 869.0,380.0 C867.9,365.0 867.3,350.9 867.2,335.0 C867.1,319.1 867.5,300.4 868.5,284.7 C869.5,269.0 871.0,255.3 873.3,240.6 C875.5,225.9 878.7,211.3 882.0,196.5 C885.3,181.7 888.7,168.1 893.0,152.0 C897.3,135.9 902.7,115.3 908.0,100.0 C913.3,84.7 922.2,66.7 925.0,60.0 L925,26 Z"/></clipPath>
  <filter id="dbl" x="-20%" y="-10%" width="140%" height="120%"><feGaussianBlur stdDeviation="7"/></filter>
  <filter id="dbl3" x="-20%" y="-10%" width="140%" height="120%"><feGaussianBlur stdDeviation="3.5"/></filter>
  <filter id="dbl2" x="-20%" y="-10%" width="140%" height="120%"><feGaussianBlur stdDeviation="5"/></filter>
  <linearGradient id="dgb" x1="0" y1="0" x2="1" y2="0"><stop offset="0" stop-color="#222" stop-opacity="0"/><stop offset="0.3" stop-color="#323232" stop-opacity="0.8"/><stop offset="0.6" stop-color="#404040" stop-opacity="0.92"/><stop offset="1" stop-color="#505050" stop-opacity="0.95"/></linearGradient>
  <radialGradient id="dsh" cx="0.5" cy="0.5" r="0.5"><stop offset="0" stop-color="#323030" stop-opacity="0.85"/><stop offset="0.5" stop-color="#2a2828" stop-opacity="0.6"/><stop offset="1" stop-color="#1a1a1a" stop-opacity="0"/></radialGradient>
  <linearGradient id="dpatch" gradientUnits="userSpaceOnUse" x1="760" y1="0" x2="806" y2="0"><stop offset="0" stop-color="#000" stop-opacity="0"/><stop offset="1" stop-color="#000" stop-opacity="0.8"/></linearGradient>
  <linearGradient id="dgr" gradientUnits="userSpaceOnUse" x1="846" y1="0" x2="908" y2="0">
    <stop offset="0" stop-color="#000" stop-opacity="0"/><stop offset="0.35" stop-color="#1c1c1c" stop-opacity="0.9"/><stop offset="1" stop-color="#484848" stop-opacity="1"/>
  </linearGradient>
</defs>
<g clip-path="url(#dockclip)">
  <path d="M812.3,26.0 C810.8,28.3 807.5,32.2 803.4,39.8 C799.3,47.4 792.3,61.3 787.5,71.6 C782.7,81.8 778.1,92.4 774.6,101.3 C771.1,110.2 769.2,116.8 766.7,125.1 C764.2,133.4 761.5,143.5 759.7,150.9 C757.9,158.3 757.8,161.4 756.0,169.4 C754.2,177.4 751.0,189.0 749.0,198.8 C747.0,208.6 745.5,218.2 744.0,228.0 C742.5,237.8 741.2,247.8 740.2,257.6 C739.2,267.4 738.5,277.2 738.0,287.0 C737.5,296.8 737.3,306.8 737.2,316.5 C737.1,326.2 737.0,335.2 737.3,345.0 C737.6,354.8 738.3,365.3 739.0,375.0 C739.7,384.7 740.2,392.2 741.5,403.0 C742.8,413.8 744.6,427.2 747.0,440.0 C749.4,452.8 751.4,464.9 755.6,480.0 C759.8,495.1 766.0,513.8 772.1,530.7 C778.2,547.6 786.7,568.6 792.0,581.5 C797.3,594.4 800.3,600.4 804.1,608.0 C807.9,615.6 813.2,623.8 815.0,627.0 L925,627 L925,590 C922.2,583.8 912.9,563.8 908.0,552.8 C903.1,541.8 900.0,536.1 895.7,524.0 C891.4,511.9 886.0,496.5 882.4,480.0 C878.8,463.5 876.2,441.7 874.0,425.0 C871.8,408.3 870.1,395.0 869.0,380.0 C867.9,365.0 867.3,350.9 867.2,335.0 C867.1,319.1 867.5,300.4 868.5,284.7 C869.5,269.0 871.0,255.3 873.3,240.6 C875.5,225.9 878.7,211.3 882.0,196.5 C885.3,181.7 888.7,168.1 893.0,152.0 C897.3,135.9 902.7,115.3 908.0,100.0 C913.3,84.7 922.2,66.7 925.0,60.0 L925,26 Z" fill="#2a2a2a" fill-opacity="0.10"/>
  <path d="M812.3,26.0 C810.8,28.3 807.5,32.2 803.4,39.8 C799.3,47.4 792.3,61.3 787.5,71.6 C782.7,81.8 778.1,92.4 774.6,101.3 C771.1,110.2 769.2,116.8 766.7,125.1 C764.2,133.4 761.5,143.5 759.7,150.9 C757.9,158.3 757.8,161.4 756.0,169.4 C754.2,177.4 751.0,189.0 749.0,198.8 C747.0,208.6 745.5,218.2 744.0,228.0 C742.5,237.8 741.2,247.8 740.2,257.6 C739.2,267.4 738.5,277.2 738.0,287.0 C737.5,296.8 737.3,306.8 737.2,316.5 C737.1,326.2 737.0,335.2 737.3,345.0 C737.6,354.8 738.3,365.3 739.0,375.0 C739.7,384.7 740.2,392.2 741.5,403.0 C742.8,413.8 744.6,427.2 747.0,440.0 C749.4,452.8 751.4,464.9 755.6,480.0 C759.8,495.1 766.0,513.8 772.1,530.7 C778.2,547.6 786.7,568.6 792.0,581.5 C797.3,594.4 800.3,600.4 804.1,608.0 C807.9,615.6 813.2,623.8 815.0,627.0 L925,627 L925,590 C922.2,583.8 912.9,563.8 908.0,552.8 C903.1,541.8 900.0,536.1 895.7,524.0 C891.4,511.9 886.0,496.5 882.4,480.0 C878.8,463.5 876.2,441.7 874.0,425.0 C871.8,408.3 870.1,395.0 869.0,380.0 C867.9,365.0 867.3,350.9 867.2,335.0 C867.1,319.1 867.5,300.4 868.5,284.7 C869.5,269.0 871.0,255.3 873.3,240.6 C875.5,225.9 878.7,211.3 882.0,196.5 C885.3,181.7 888.7,168.1 893.0,152.0 C897.3,135.9 902.7,115.3 908.0,100.0 C913.3,84.7 922.2,66.7 925.0,60.0 L925,26 Z" fill="#000" fill-opacity="0.72" transform="translate(11,0)" filter="url(#dbl3)"/>
  <rect x="760" y="312" width="112" height="28" fill="url(#dpatch)"/>
  <ellipse cx="740" cy="335" rx="66" ry="240" fill="url(#dsh)"/>
  <rect x="878.0" y="26.0" width="62.0" height="3.2" fill="url(#dgb)" opacity="1.00"/><rect x="877.8" y="29.0" width="60.9" height="3.2" fill="url(#dgb)" opacity="1.00"/><rect x="877.6" y="32.0" width="59.7" height="3.2" fill="url(#dgb)" opacity="1.00"/><rect x="877.5" y="35.0" width="58.6" height="3.2" fill="url(#dgb)" opacity="1.00"/><rect x="877.3" y="38.0" width="57.4" height="3.2" fill="url(#dgb)" opacity="1.00"/><rect x="877.1" y="41.0" width="56.3" height="3.2" fill="url(#dgb)" opacity="1.00"/><rect x="876.9" y="44.0" width="55.1" height="3.2" fill="url(#dgb)" opacity="1.00"/><rect x="876.8" y="47.0" width="54.0" height="3.2" fill="url(#dgb)" opacity="1.00"/><rect x="876.6" y="50.0" width="52.8" height="3.2" fill="url(#dgb)" opacity="1.00"/><rect x="876.4" y="53.0" width="51.7" height="3.2" fill="url(#dgb)" opacity="1.00"/><rect x="876.2" y="56.0" width="50.5" height="3.2" fill="url(#dgb)" opacity="1.00"/><rect x="876.1" y="59.0" width="49.4" height="3.2" fill="url(#dgb)" opacity="1.00"/><rect x="875.8" y="62.0" width="48.3" height="3.2" fill="url(#dgb)" opacity="1.00"/><rect x="875.6" y="65.0" width="47.3" height="3.2" fill="url(#dgb)" opacity="1.00"/><rect x="875.3" y="68.0" width="46.3" height="3.2" fill="url(#dgb)" opacity="1.00"/><rect x="875.1" y="71.0" width="45.2" height="3.2" fill="url(#dgb)" opacity="1.00"/><rect x="874.8" y="74.0" width="44.2" height="3.2" fill="url(#dgb)" opacity="1.00"/><rect x="874.6" y="77.0" width="43.2" height="3.2" fill="url(#dgb)" opacity="1.00"/><rect x="874.3" y="80.0" width="42.2" height="3.2" fill="url(#dgb)" opacity="1.00"/><rect x="874.1" y="83.0" width="41.1" height="3.2" fill="url(#dgb)" opacity="1.00"/><rect x="873.8" y="86.0" width="40.1" height="3.2" fill="url(#dgb)" opacity="1.00"/><rect x="873.6" y="89.0" width="39.1" height="3.2" fill="url(#dgb)" opacity="1.00"/><rect x="873.3" y="92.0" width="38.1" height="3.2" fill="url(#dgb)" opacity="1.00"/><rect x="873.1" y="95.0" width="37.0" height="3.2" fill="url(#dgb)" opacity="1.00"/><rect x="872.8" y="98.0" width="36.0" height="3.2" fill="url(#dgb)" opacity="1.00"/><rect x="872.6" y="101.0" width="35.1" height="3.2" fill="url(#dgb)" opacity="1.00"/><rect x="872.3" y="104.0" width="34.5" height="3.2" fill="url(#dgb)" opacity="1.00"/><rect x="872.1" y="107.0" width="33.9" height="3.2" fill="url(#dgb)" opacity="1.00"/><rect x="871.7" y="110.0" width="33.4" height="3.2" fill="url(#dgb)" opacity="1.00"/><rect x="871.3" y="113.0" width="33.0" height="3.2" fill="url(#dgb)" opacity="1.00"/><rect x="870.9" y="116.0" width="32.5" height="3.2" fill="url(#dgb)" opacity="1.00"/><rect x="870.4" y="119.0" width="32.1" height="3.2" fill="url(#dgb)" opacity="1.00"/><rect x="870.0" y="122.0" width="31.7" height="3.2" fill="url(#dgb)" opacity="1.00"/><rect x="869.6" y="125.0" width="31.2" height="3.2" fill="url(#dgb)" opacity="1.00"/><rect x="869.1" y="128.0" width="30.8" height="3.2" fill="url(#dgb)" opacity="1.00"/><rect x="868.7" y="131.0" width="30.3" height="3.2" fill="url(#dgb)" opacity="1.00"/><rect x="868.3" y="134.0" width="29.9" height="3.2" fill="url(#dgb)" opacity="1.00"/><rect x="867.9" y="137.0" width="29.5" height="3.2" fill="url(#dgb)" opacity="1.00"/><rect x="867.4" y="140.0" width="29.0" height="3.2" fill="url(#dgb)" opacity="1.00"/><rect x="867.0" y="143.0" width="28.6" height="3.2" fill="url(#dgb)" opacity="1.00"/><rect x="866.6" y="146.0" width="28.2" height="3.2" fill="url(#dgb)" opacity="1.00"/><rect x="866.1" y="149.0" width="27.7" height="3.2" fill="url(#dgb)" opacity="0.99"/><rect x="865.8" y="152.0" width="27.2" height="3.2" fill="url(#dgb)" opacity="0.98"/><rect x="865.5" y="155.0" width="26.8" height="3.2" fill="url(#dgb)" opacity="0.98"/><rect x="865.1" y="158.0" width="26.4" height="3.2" fill="url(#dgb)" opacity="0.97"/><rect x="864.8" y="161.0" width="26.0" height="3.2" fill="url(#dgb)" opacity="0.96"/><rect x="864.5" y="164.0" width="25.6" height="3.2" fill="url(#dgb)" opacity="0.96"/><rect x="864.2" y="167.0" width="25.1" height="3.2" fill="url(#dgb)" opacity="0.95"/><rect x="863.8" y="170.0" width="24.7" height="3.2" fill="url(#dgb)" opacity="0.94"/><rect x="863.5" y="173.0" width="24.3" height="3.2" fill="url(#dgb)" opacity="0.93"/><rect x="863.2" y="176.0" width="23.9" height="3.2" fill="url(#dgb)" opacity="0.93"/><rect x="862.8" y="179.0" width="23.5" height="3.2" fill="url(#dgb)" opacity="0.92"/><rect x="862.5" y="182.0" width="23.1" height="3.2" fill="url(#dgb)" opacity="0.91"/><rect x="862.2" y="185.0" width="22.6" height="3.2" fill="url(#dgb)" opacity="0.91"/><rect x="861.9" y="188.0" width="22.2" height="3.2" fill="url(#dgb)" opacity="0.90"/><rect x="861.5" y="191.0" width="21.8" height="3.2" fill="url(#dgb)" opacity="0.89"/><rect x="861.2" y="194.0" width="21.4" height="3.2" fill="url(#dgb)" opacity="0.88"/><rect x="860.9" y="197.0" width="21.0" height="3.2" fill="url(#dgb)" opacity="0.88"/><rect x="860.5" y="200.0" width="20.8" height="3.2" fill="url(#dgb)" opacity="0.87"/><rect x="860.2" y="203.0" width="20.5" height="3.2" fill="url(#dgb)" opacity="0.86"/><rect x="859.9" y="206.0" width="20.3" height="3.2" fill="url(#dgb)" opacity="0.86"/><rect x="859.5" y="209.0" width="20.0" height="3.2" fill="url(#dgb)" opacity="0.85"/><rect x="859.2" y="212.0" width="19.8" height="3.2" fill="url(#dgb)" opacity="0.84"/><rect x="858.8" y="215.0" width="19.5" height="3.2" fill="url(#dgb)" opacity="0.83"/><rect x="858.5" y="218.0" width="19.3" height="3.2" fill="url(#dgb)" opacity="0.83"/><rect x="858.2" y="221.0" width="19.0" height="3.2" fill="url(#dgb)" opacity="0.82"/><rect x="857.8" y="224.0" width="18.8" height="3.2" fill="url(#dgb)" opacity="0.81"/><rect x="857.5" y="227.0" width="18.5" height="3.2" fill="url(#dgb)" opacity="0.81"/><rect x="857.1" y="230.0" width="18.3" height="3.2" fill="url(#dgb)" opacity="0.80"/><rect x="856.8" y="233.0" width="18.0" height="3.2" fill="url(#dgb)" opacity="0.79"/><rect x="856.5" y="236.0" width="17.8" height="3.2" fill="url(#dgb)" opacity="0.78"/><rect x="856.1" y="239.0" width="17.5" height="3.2" fill="url(#dgb)" opacity="0.78"/><rect x="855.9" y="242.0" width="17.3" height="3.2" fill="url(#dgb)" opacity="0.77"/><rect x="855.7" y="245.0" width="17.2" height="3.2" fill="url(#dgb)" opacity="0.76"/><rect x="855.5" y="248.0" width="17.0" height="3.2" fill="url(#dgb)" opacity="0.76"/><rect x="855.3" y="251.0" width="16.9" height="3.2" fill="url(#dgb)" opacity="0.75"/><rect x="855.1" y="254.0" width="16.8" height="3.2" fill="url(#dgb)" opacity="0.74"/><rect x="854.9" y="257.0" width="16.6" height="3.2" fill="url(#dgb)" opacity="0.73"/><rect x="854.7" y="260.0" width="16.5" height="3.2" fill="url(#dgb)" opacity="0.73"/><rect x="854.5" y="263.0" width="16.4" height="3.2" fill="url(#dgb)" opacity="0.72"/><rect x="854.3" y="266.0" width="16.3" height="3.2" fill="url(#dgb)" opacity="0.71"/><rect x="854.1" y="269.0" width="16.1" height="3.2" fill="url(#dgb)" opacity="0.71"/><rect x="853.9" y="272.0" width="16.0" height="3.2" fill="url(#dgb)" opacity="0.70"/><rect x="853.7" y="275.0" width="15.9" height="3.2" fill="url(#dgb)" opacity="0.69"/><rect x="853.5" y="278.0" width="15.8" height="3.2" fill="url(#dgb)" opacity="0.69"/><rect x="853.3" y="281.0" width="15.6" height="3.2" fill="url(#dgb)" opacity="0.68"/><rect x="853.1" y="284.0" width="15.5" height="3.2" fill="url(#dgb)" opacity="0.67"/><rect x="853.0" y="287.0" width="15.5" height="3.2" fill="url(#dgb)" opacity="0.66"/><rect x="852.9" y="290.0" width="15.5" height="3.2" fill="url(#dgb)" opacity="0.66"/><rect x="852.8" y="293.0" width="15.4" height="3.2" fill="url(#dgb)" opacity="0.65"/><rect x="852.8" y="296.0" width="15.4" height="3.2" fill="url(#dgb)" opacity="0.64"/><rect x="852.7" y="299.0" width="15.4" height="3.2" fill="url(#dgb)" opacity="0.64"/><rect x="852.7" y="302.0" width="15.4" height="3.2" fill="url(#dgb)" opacity="0.63"/><rect x="852.6" y="305.0" width="15.4" height="3.2" fill="url(#dgb)" opacity="0.62"/><rect x="852.5" y="308.0" width="15.4" height="3.2" fill="url(#dgb)" opacity="0.61"/><rect x="852.5" y="311.0" width="15.3" height="3.2" fill="url(#dgb)" opacity="0.61"/><rect x="852.4" y="314.0" width="15.3" height="3.2" fill="url(#dgb)" opacity="0.60"/><rect x="852.4" y="317.0" width="15.3" height="3.2" fill="url(#dgb)" opacity="0.59"/><rect x="852.3" y="320.0" width="15.3" height="3.2" fill="url(#dgb)" opacity="0.59"/><rect x="852.2" y="323.0" width="15.3" height="3.2" fill="url(#dgb)" opacity="0.58"/><rect x="852.2" y="326.0" width="15.3" height="3.2" fill="url(#dgb)" opacity="0.57"/><rect x="852.1" y="329.0" width="15.2" height="3.2" fill="url(#dgb)" opacity="0.56"/><rect x="852.1" y="332.0" width="15.2" height="3.2" fill="url(#dgb)" opacity="0.56"/><rect x="852.0" y="335.0" width="15.2" height="3.2" fill="url(#dgb)" opacity="0.55"/><rect x="852.1" y="338.0" width="15.3" height="3.2" fill="url(#dgb)" opacity="0.56"/><rect x="852.1" y="341.0" width="15.3" height="3.2" fill="url(#dgb)" opacity="0.56"/><rect x="852.2" y="344.0" width="15.4" height="3.2" fill="url(#dgb)" opacity="0.57"/><rect x="852.3" y="347.0" width="15.4" height="3.2" fill="url(#dgb)" opacity="0.58"/><rect x="852.3" y="350.0" width="15.5" height="3.2" fill="url(#dgb)" opacity="0.59"/><rect x="852.4" y="353.0" width="15.5" height="3.2" fill="url(#dgb)" opacity="0.59"/><rect x="852.5" y="356.0" width="15.6" height="3.2" fill="url(#dgb)" opacity="0.60"/><rect x="852.5" y="359.0" width="15.6" height="3.2" fill="url(#dgb)" opacity="0.61"/><rect x="852.6" y="362.0" width="15.7" height="3.2" fill="url(#dgb)" opacity="0.61"/><rect x="852.7" y="365.0" width="15.7" height="3.2" fill="url(#dgb)" opacity="0.62"/><rect x="852.7" y="368.0" width="15.8" height="3.2" fill="url(#dgb)" opacity="0.63"/><rect x="852.8" y="371.0" width="15.8" height="3.2" fill="url(#dgb)" opacity="0.64"/><rect x="852.9" y="374.0" width="15.9" height="3.2" fill="url(#dgb)" opacity="0.64"/><rect x="852.9" y="377.0" width="15.9" height="3.2" fill="url(#dgb)" opacity="0.65"/><rect x="853.0" y="380.0" width="16.0" height="3.2" fill="url(#dgb)" opacity="0.66"/><rect x="853.3" y="383.0" width="16.1" height="3.2" fill="url(#dgb)" opacity="0.66"/><rect x="853.5" y="386.0" width="16.1" height="3.2" fill="url(#dgb)" opacity="0.67"/><rect x="853.8" y="389.0" width="16.2" height="3.2" fill="url(#dgb)" opacity="0.68"/><rect x="854.1" y="392.0" width="16.3" height="3.2" fill="url(#dgb)" opacity="0.69"/><rect x="854.3" y="395.0" width="16.3" height="3.2" fill="url(#dgb)" opacity="0.69"/><rect x="854.6" y="398.0" width="16.4" height="3.2" fill="url(#dgb)" opacity="0.70"/><rect x="854.9" y="401.0" width="16.5" height="3.2" fill="url(#dgb)" opacity="0.71"/><rect x="855.1" y="404.0" width="16.5" height="3.2" fill="url(#dgb)" opacity="0.71"/><rect x="855.4" y="407.0" width="16.6" height="3.2" fill="url(#dgb)" opacity="0.72"/><rect x="855.7" y="410.0" width="16.7" height="3.2" fill="url(#dgb)" opacity="0.73"/><rect x="855.9" y="413.0" width="16.7" height="3.2" fill="url(#dgb)" opacity="0.73"/><rect x="856.2" y="416.0" width="16.8" height="3.2" fill="url(#dgb)" opacity="0.74"/><rect x="856.5" y="419.0" width="16.9" height="3.2" fill="url(#dgb)" opacity="0.75"/><rect x="856.7" y="422.0" width="16.9" height="3.2" fill="url(#dgb)" opacity="0.76"/><rect x="857.0" y="425.0" width="17.0" height="3.2" fill="url(#dgb)" opacity="0.76"/><rect x="857.3" y="428.0" width="17.2" height="3.2" fill="url(#dgb)" opacity="0.77"/><rect x="857.5" y="431.0" width="17.4" height="3.2" fill="url(#dgb)" opacity="0.78"/><rect x="857.8" y="434.0" width="17.6" height="3.2" fill="url(#dgb)" opacity="0.78"/><rect x="858.1" y="437.0" width="17.7" height="3.2" fill="url(#dgb)" opacity="0.79"/><rect x="858.4" y="440.0" width="17.9" height="3.2" fill="url(#dgb)" opacity="0.80"/><rect x="858.6" y="443.0" width="18.1" height="3.2" fill="url(#dgb)" opacity="0.81"/><rect x="858.9" y="446.0" width="18.3" height="3.2" fill="url(#dgb)" opacity="0.81"/><rect x="859.2" y="449.0" width="18.5" height="3.2" fill="url(#dgb)" opacity="0.82"/><rect x="859.5" y="452.0" width="18.7" height="3.2" fill="url(#dgb)" opacity="0.83"/><rect x="859.7" y="455.0" width="18.9" height="3.2" fill="url(#dgb)" opacity="0.83"/><rect x="860.0" y="458.0" width="19.0" height="3.2" fill="url(#dgb)" opacity="0.84"/><rect x="860.3" y="461.0" width="19.2" height="3.2" fill="url(#dgb)" opacity="0.85"/><rect x="860.5" y="464.0" width="19.4" height="3.2" fill="url(#dgb)" opacity="0.86"/><rect x="860.8" y="467.0" width="19.6" height="3.2" fill="url(#dgb)" opacity="0.86"/><rect x="861.1" y="470.0" width="19.8" height="3.2" fill="url(#dgb)" opacity="0.87"/><rect x="861.4" y="473.0" width="20.0" height="3.2" fill="url(#dgb)" opacity="0.88"/><rect x="861.6" y="476.0" width="20.2" height="3.2" fill="url(#dgb)" opacity="0.88"/><rect x="861.9" y="479.0" width="20.3" height="3.2" fill="url(#dgb)" opacity="0.89"/><rect x="862.1" y="482.0" width="20.9" height="3.2" fill="url(#dgb)" opacity="0.90"/><rect x="862.3" y="485.0" width="21.6" height="3.2" fill="url(#dgb)" opacity="0.91"/><rect x="862.5" y="488.0" width="22.3" height="3.2" fill="url(#dgb)" opacity="0.91"/><rect x="862.8" y="491.0" width="23.0" height="3.2" fill="url(#dgb)" opacity="0.92"/><rect x="863.0" y="494.0" width="23.7" height="3.2" fill="url(#dgb)" opacity="0.93"/><rect x="863.2" y="497.0" width="24.4" height="3.2" fill="url(#dgb)" opacity="0.93"/><rect x="863.4" y="500.0" width="25.1" height="3.2" fill="url(#dgb)" opacity="0.94"/><rect x="863.6" y="503.0" width="25.8" height="3.2" fill="url(#dgb)" opacity="0.95"/><rect x="863.8" y="506.0" width="26.5" height="3.2" fill="url(#dgb)" opacity="0.96"/><rect x="864.0" y="509.0" width="27.2" height="3.2" fill="url(#dgb)" opacity="0.96"/><rect x="864.2" y="512.0" width="27.9" height="3.2" fill="url(#dgb)" opacity="0.97"/><rect x="864.4" y="515.0" width="28.6" height="3.2" fill="url(#dgb)" opacity="0.98"/><rect x="864.6" y="518.0" width="29.3" height="3.2" fill="url(#dgb)" opacity="0.98"/><rect x="864.8" y="521.0" width="30.0" height="3.2" fill="url(#dgb)" opacity="0.99"/><rect x="865.0" y="524.0" width="30.7" height="3.2" fill="url(#dgb)" opacity="1.00"/><rect x="865.2" y="527.0" width="31.8" height="3.2" fill="url(#dgb)" opacity="1.00"/><rect x="865.4" y="530.0" width="32.8" height="3.2" fill="url(#dgb)" opacity="1.00"/><rect x="865.6" y="533.0" width="33.9" height="3.2" fill="url(#dgb)" opacity="1.00"/><rect x="865.8" y="536.0" width="35.0" height="3.2" fill="url(#dgb)" opacity="1.00"/><rect x="866.0" y="539.0" width="36.1" height="3.2" fill="url(#dgb)" opacity="1.00"/><rect x="866.2" y="542.0" width="37.1" height="3.2" fill="url(#dgb)" opacity="1.00"/><rect x="866.4" y="545.0" width="38.2" height="3.2" fill="url(#dgb)" opacity="1.00"/><rect x="866.7" y="548.0" width="39.3" height="3.2" fill="url(#dgb)" opacity="1.00"/><rect x="866.9" y="551.0" width="40.4" height="3.2" fill="url(#dgb)" opacity="1.00"/><rect x="867.0" y="554.0" width="41.5" height="3.2" fill="url(#dgb)" opacity="1.00"/><rect x="867.1" y="557.0" width="42.8" height="3.2" fill="url(#dgb)" opacity="1.00"/><rect x="867.2" y="560.0" width="44.1" height="3.2" fill="url(#dgb)" opacity="1.00"/><rect x="867.3" y="563.0" width="45.4" height="3.2" fill="url(#dgb)" opacity="1.00"/><rect x="867.4" y="566.0" width="46.7" height="3.2" fill="url(#dgb)" opacity="1.00"/><rect x="867.4" y="569.0" width="48.0" height="3.2" fill="url(#dgb)" opacity="1.00"/><rect x="867.5" y="572.0" width="49.3" height="3.2" fill="url(#dgb)" opacity="1.00"/><rect x="867.6" y="575.0" width="50.6" height="3.2" fill="url(#dgb)" opacity="1.00"/><rect x="867.7" y="578.0" width="51.8" height="3.2" fill="url(#dgb)" opacity="1.00"/><rect x="867.8" y="581.0" width="53.1" height="3.2" fill="url(#dgb)" opacity="1.00"/><rect x="867.8" y="584.0" width="54.4" height="3.2" fill="url(#dgb)" opacity="1.00"/><rect x="867.9" y="587.0" width="55.7" height="3.2" fill="url(#dgb)" opacity="1.00"/><rect x="868.0" y="590.0" width="57.0" height="3.2" fill="url(#dgb)" opacity="1.00"/><rect x="868.1" y="593.0" width="58.1" height="3.2" fill="url(#dgb)" opacity="1.00"/><rect x="868.2" y="596.0" width="59.3" height="3.2" fill="url(#dgb)" opacity="1.00"/><rect x="868.2" y="599.0" width="60.4" height="3.2" fill="url(#dgb)" opacity="1.00"/><rect x="868.3" y="602.0" width="61.5" height="3.2" fill="url(#dgb)" opacity="1.00"/><rect x="868.4" y="605.0" width="62.7" height="3.2" fill="url(#dgb)" opacity="1.00"/><rect x="868.5" y="608.0" width="63.8" height="3.2" fill="url(#dgb)" opacity="1.00"/><rect x="868.6" y="611.0" width="64.9" height="3.2" fill="url(#dgb)" opacity="1.00"/><rect x="868.6" y="614.0" width="66.1" height="3.2" fill="url(#dgb)" opacity="1.00"/><rect x="868.7" y="617.0" width="67.2" height="3.2" fill="url(#dgb)" opacity="1.00"/><rect x="868.8" y="620.0" width="68.4" height="3.2" fill="url(#dgb)" opacity="1.00"/><rect x="868.9" y="623.0" width="69.5" height="3.2" fill="url(#dgb)" opacity="1.00"/><rect x="869.0" y="626.0" width="70.6" height="3.2" fill="url(#dgb)" opacity="1.00"/>
</g>
<path d="M812.3,26.0 C810.8,28.3 807.5,32.2 803.4,39.8 C799.3,47.4 792.3,61.3 787.5,71.6 C782.7,81.8 778.1,92.4 774.6,101.3 C771.1,110.2 769.2,116.8 766.7,125.1 C764.2,133.4 761.5,143.5 759.7,150.9 C757.9,158.3 757.8,161.4 756.0,169.4 C754.2,177.4 751.0,189.0 749.0,198.8 C747.0,208.6 745.5,218.2 744.0,228.0 C742.5,237.8 741.2,247.8 740.2,257.6 C739.2,267.4 738.5,277.2 738.0,287.0 C737.5,296.8 737.3,306.8 737.2,316.5 C737.1,326.2 737.0,335.2 737.3,345.0 C737.6,354.8 738.3,365.3 739.0,375.0 C739.7,384.7 740.2,392.2 741.5,403.0 C742.8,413.8 744.6,427.2 747.0,440.0 C749.4,452.8 751.4,464.9 755.6,480.0 C759.8,495.1 766.0,513.8 772.1,530.7 C778.2,547.6 786.7,568.6 792.0,581.5 C797.3,594.4 800.3,600.4 804.1,608.0 C807.9,615.6 813.2,623.8 815.0,627.0" fill="none" stroke="#6a6a66" stroke-width="0.8" opacity="0.6"/>
</svg>


<svg class="abs" style="left:0;top:0;" width="908" height="680" viewBox="0 0 908 680">
<defs>
 <linearGradient id="gwh" x1="0" y1="0" x2="0" y2="1"><stop offset="0" stop-color="#fff"/><stop offset="0.75" stop-color="#e6e6e6"/><stop offset="1" stop-color="#9a9a9a"/></linearGradient>
 <linearGradient id="gwr" x1="0" y1="0" x2="1" y2="1"><stop offset="0" stop-color="#7c7c7c"/><stop offset="1" stop-color="#c4c4c4"/></linearGradient>
 <linearGradient id="gcar" x1="0" y1="0" x2="1" y2="0"><stop offset="0" stop-color="#d2d2d2"/><stop offset="0.6" stop-color="#9a9a9a"/><stop offset="1" stop-color="#3a3a3a"/></linearGradient>
 <radialGradient id="gus" cx="0.45" cy="0.4" r="0.7"><stop offset="0" stop-color="#fff"/><stop offset="1" stop-color="#a8a8a8"/></radialGradient>
</defs>
<!-- MANUAL -->
<polyline points="848.7,36.6 868.5,32.8 870.4,36.6" fill="none" stroke="#bdbdbd" stroke-width="1.3"/>
<rect x="848.4" y="36.9" width="26" height="34.4" rx="2.4" fill="#050505" stroke="#bdbdbd" stroke-width="1.8"/>
<g stroke="#1388c8" stroke-width="1.5">
<line x1="851.6" y1="43.5" x2="871" y2="43.5"/><line x1="851.6" y1="49.2" x2="871" y2="49.2"/>
<line x1="851.6" y1="54.8" x2="861.6" y2="54.8"/><line x1="851.6" y1="60" x2="858.8" y2="60"/><line x1="851.6" y1="65.4" x2="855.6" y2="65.4"/></g>
<path d="M863.6,52 H870.4 L866.6,61.4 L869.8,62 L864.6,67.2 L863,66 L866,62.8 L863.6,62 L866.8,54.6 H863.6 Z" fill="#1496d8"/>
<!-- USER PROFILES -->
<path d="M818,118.6 H841.4 a1.6,1.6 0 0 1 1.6,1.6 V146.4 L835,154.4 H818 a1.6,1.6 0 0 1 -1.6,-1.6 V120.2 a1.6,1.6 0 0 1 1.6,-1.6 Z" fill="#050505" stroke="#b4b4b4" stroke-width="1.8"/>
<path d="M835,154.4 V147.6 a1.2,1.2 0 0 1 1.2,-1.2 H843 Z" fill="#d8d8d8"/>
<g stroke="#1382c0" stroke-width="1.25"><line x1="820" y1="125.8" x2="835" y2="125.8"/><line x1="820" y1="131.2" x2="835" y2="131.2"/><line x1="820" y1="136.5" x2="832.6" y2="136.5"/><line x1="820" y1="141.8" x2="832" y2="141.8"/><line x1="820" y1="147" x2="832.6" y2="147"/></g>
<circle cx="841" cy="128.4" r="5.5" fill="url(#gus)"/>
<path d="M833.4,142 V139.4 Q833.4,134 838.6,133 H843.6 Q849.4,134 849.4,139.4 V142 Z" fill="url(#gus)"/>
<!-- WEB -->
<g font-family="'Liberation Sans','DejaVu Sans',sans-serif" fill="#1496d8" font-weight="bold">
<text transform="translate(778.8,219.2) rotate(14)" font-size="10">W</text>
<text transform="translate(787.4,225.6) rotate(15) scale(0.8,1)" font-size="14.6">W</text>
<text transform="translate(798,231.6) rotate(15) scale(0.92,1)" font-size="17" fill-opacity="0.85">W</text>
</g>
<circle cx="810.3" cy="223.3" r="8.1" fill="#062a44" fill-opacity="0.5" stroke="#1496d8" stroke-width="2.5"/>
<line x1="817" y1="229.6" x2="826" y2="237" stroke="#1496d8" stroke-width="4.2"/>
<!-- 5G -->
<text x="755.6" y="331.6" font-family="'Liberation Sans','DejaVu Sans',sans-serif" font-weight="bold" font-size="51" fill="#7a7a7a" textLength="30.6" lengthAdjust="spacingAndGlyphs">5</text>
<text x="785.4" y="331.6" font-family="'Liberation Sans','DejaVu Sans',sans-serif" font-weight="bold" font-size="39" fill="#7a7a7a" textLength="28.5" lengthAdjust="spacingAndGlyphs">G</text>
<text x="755.6" y="330.6" font-family="'Liberation Sans','DejaVu Sans',sans-serif" font-weight="bold" font-size="51" fill="url(#gwh)" textLength="30.6" lengthAdjust="spacingAndGlyphs">5</text>
<text x="786" y="330.6" font-family="'Liberation Sans','DejaVu Sans',sans-serif" font-weight="bold" font-size="39" fill="url(#gwh)" stroke="#ececec" stroke-width="1.3" textLength="27.4" lengthAdjust="spacingAndGlyphs">G</text>
<g fill="none" stroke="#1496d8" stroke-width="2.5" stroke-linecap="round">
<path d="M802.2,288.6 A18.6,18.6 0 0 1 824.4,311.8"/>
<path d="M804.2,294 A13.2,13.2 0 0 1 819.4,309.8"/>
<path d="M806.4,299.2 A7.8,7.8 0 0 1 814.6,308"/>
</g>
<circle cx="797.1" cy="325.6" r="8" fill="#cfcfcf" stroke="#1496d8" stroke-width="3"/>
<ellipse cx="797.6" cy="324.6" rx="4.4" ry="3.4" fill="#f6f6f6"/>
<line x1="803.6" y1="332.6" x2="813.2" y2="341" stroke="#1496d8" stroke-width="4.4"/>
<!-- WIFI -->
<g fill="none" stroke="#1496d8" stroke-width="3.1" stroke-linecap="round">
<path d="M785.6,392.8 Q797,384.4 809.4,389.4"/>
<path d="M788.8,398.8 Q797.4,392.2 806.8,396.6"/>
<path d="M793,405.6 Q798.6,401 805.6,404.6"/>
</g>
<circle cx="799.4" cy="413.2" r="3.6" fill="#1496d8"/>
<circle cx="814.3" cy="399.3" r="8.2" fill="#051526" stroke="#1496d8" stroke-width="3"/>
<line x1="821.4" y1="406.6" x2="830" y2="413.6" stroke="#1496d8" stroke-width="4.2"/>
<!-- NET TOOLS -->
<g stroke="#1b86bd" stroke-width="1.1"><line x1="812" y1="483.7" x2="822.5" y2="494.7"/><line x1="832.3" y1="484.4" x2="822.5" y2="494.7"/></g>
<circle cx="812" cy="483.7" r="3.7" fill="#1b86bd"/><circle cx="832.3" cy="484.4" r="2.7" fill="#1b86bd"/><circle cx="822.5" cy="494.7" r="5.2" fill="#1b86bd"/>
<path d="M831.2,492.4 Q838,489.6 843.6,493 Q847.6,496 847.6,500 L856.6,503.4 a4.3,4.3 0 0 1 -2.8,8.2 L844.6,508.4 Q840,511.6 834.6,510.2 Q829.4,508.4 827.2,502.6 L834.4,505 L836.4,497.4 Z" fill="url(#gwr)"/>
<!-- DRIVE TEST -->
<g stroke="#1b86bd" stroke-width="1"><line x1="845" y1="582.4" x2="852" y2="582.4"/><line x1="842.4" y1="584.8" x2="851" y2="584.8"/><line x1="839.6" y1="587.6" x2="850" y2="587.6"/></g>
<path d="M852.6,581.2 H870.6 L880.6,586.4 Q885.6,587.4 885.6,591 V593 H849.2 V587.6 Q849.4,583.4 852.6,581.2 Z" fill="url(#gcar)"/>
<rect x="862" y="583" width="8.2" height="8" fill="#1686c8"/><rect x="863.8" y="584.8" width="4" height="4" fill="#04121e"/>
<path d="M852.2,583.4 l5,-1.2 l-0.4,2.4 l-5,1.6 z" fill="#49a8d8"/>
<circle cx="856.2" cy="592" r="3.3" fill="#0a0a0a" stroke="#d4d4d4" stroke-width="1.1"/>
<circle cx="877.4" cy="592" r="3.3" fill="#0a0a0a" stroke="#8a8a8a" stroke-width="1.1"/>
</svg>

<div class="t" style="left:712.3px;width:300px;text-align:center;top:78.4px;font-size:8.87px;color:#bcbcbc;font-weight:bold;">MANUAL</div>
<div class="t" style="left:680.5px;width:300px;text-align:center;top:160.7px;font-size:8.87px;color:#bcbcbc;font-weight:bold;">USER PROFILES</div>
<div class="t" style="left:652.2px;width:300px;text-align:center;top:253.6px;font-size:8.87px;color:#bcbcbc;font-weight:bold;">WEB</div>
<div class="t" style="left:656.0px;width:300px;text-align:center;top:430.1px;font-size:8.87px;color:#bcbcbc;font-weight:bold;">WIFI ANALYZER</div>
<div class="t" style="left:684.2px;width:300px;text-align:center;top:523.6px;font-size:8.87px;color:#bcbcbc;font-weight:bold;">NET TOOLS</div>
<div class="t" style="left:714.7px;width:300px;text-align:center;top:606.5px;font-size:8.87px;color:#bcbcbc;font-weight:bold;">DRIVE TEST</div>
<div class="t" style="left:641.7px;width:300px;text-align:center;top:350.4px;font-size:12.41px;color:#1496d8;font-weight:bold;">4G/5G ANALYZER</div>
<svg class="abs" style="left:0;top:0;z-index:5;" width="908" height="680" viewBox="0 0 908 680">
<!-- home -->
<polyline points="22.6,652.6 37.1,639.9 51.2,652.6" fill="none" stroke="#fff" stroke-width="2.6" stroke-linejoin="miter"/>
<path d="M26,650.4 L37.1,641.6 L47,650.4 V665.4 H38.8 V658.8 H33.8 V665.4 H26 Z" fill="#fff"/>
<rect x="44.6" y="641.2" width="3" height="7" fill="#e8e8e8"/>
<!-- CH -->
<text x="87" y="654.4" font-family="'Liberation Sans','DejaVu Sans',sans-serif" font-weight="bold" font-size="20.3" fill="#fff" textLength="24.2" lengthAdjust="spacingAndGlyphs">CH</text>
<text x="90.2" y="664.7" font-family="'Liberation Mono','DejaVu Sans Mono',monospace" font-size="8.4" fill="#9a9a9a" textLength="16" lengthAdjust="spacingAndGlyphs">MHz</text>
<path d="M84,646.6 Q79.6,655 86,663" fill="none" stroke="#d8d8d8" stroke-width="1" stroke-dasharray="1 1.2"/>
<path d="M112.6,645 Q118,653 113.6,661.6" fill="none" stroke="#d8d8d8" stroke-width="1" stroke-dasharray="1 1.2"/>
<circle cx="84.2" cy="646.4" r="1.3" fill="#e8e8e8"/><circle cx="113.6" cy="661.8" r="1.3" fill="#e8e8e8"/>
<!-- antenna -->
<g fill="none" stroke="#fff" stroke-width="1.7" stroke-linecap="round" stroke-linejoin="round">
<polyline points="657.4,661.4 662.9,645.2 668.6,661.4"/>
<path d="M660.8,652 L665.6,656.4 L659.2,657.6 M665,652 L660.4,656.4"/>
</g>
<circle cx="662.9" cy="645.4" r="1.7" fill="#fff"/>
<g fill="none" stroke="#a8a8a8" stroke-width="1.5" stroke-linecap="round">
<path d="M659.4,642.2 Q657.4,646 659.4,650"/><path d="M666.4,642.2 Q668.4,646 666.4,650"/>
<path d="M656,640.8 Q652.6,646 656,651.2"/><path d="M669.8,640.8 Q673.2,646 669.8,651.2"/>
</g>
<!-- user -->
<circle cx="792.2" cy="645.8" r="4.7" fill="#fff"/>
<path d="M784,661.7 V656 Q784,650.6 789,649.8 H795.6 Q801.2,650.6 801.2,656 V661.7 Z" fill="#fff"/>
<!-- save -->
<path d="M859.6,638.2 H879.6 L884.7,643.2 V663 a2.7,2.7 0 0 1 -2.7,2.7 H859.6 a2.7,2.7 0 0 1 -2.7,-2.7 V640.9 a2.7,2.7 0 0 1 2.7,-2.7 Z" fill="#fff"/>
<rect x="862.9" y="640.3" width="15.2" height="7.5" fill="#0a0a0a"/>
<rect x="873" y="641.2" width="3" height="5.8" fill="#fff"/>
<rect x="860.2" y="652.5" width="21.2" height="10.5" rx="1" fill="#0a0a0a"/>
<g fill="none" stroke="#fff" stroke-width="1.3">
<path d="M867.2,657.2 a3.4,3.4 0 0 1 6,-1.6"/><path d="M873.8,658.4 a3.4,3.4 0 0 1 -6,1.6"/></g>
<polygon points="874.6,653.6 874.6,657 871.4,656.4" fill="#fff"/><polygon points="866.4,662 866.4,658.6 869.6,659.2" fill="#fff"/>

<defs><linearGradient id="ghl" x1="0" y1="0" x2="1" y2="0"><stop offset="0" stop-color="#3c3c3c"/><stop offset="1" stop-color="#626262"/></linearGradient></defs>
<polygon points="0,299.8 22.1,324.9 0,351.2" fill="url(#ghl)"/>
<rect x="3.4" y="314.4" width="1.8" height="1.6" fill="#1c1c1c"/><rect x="3.4" y="317.3" width="1.8" height="1.6" fill="#1c1c1c"/><rect x="3.4" y="320.2" width="1.8" height="1.6" fill="#1c1c1c"/><rect x="3.4" y="323.1" width="1.8" height="1.6" fill="#1c1c1c"/><rect x="3.4" y="326.0" width="1.8" height="1.6" fill="#1c1c1c"/><rect x="3.4" y="328.9" width="1.8" height="1.6" fill="#1c1c1c"/><rect x="3.4" y="331.8" width="1.8" height="1.6" fill="#1c1c1c"/><rect x="3.4" y="334.7" width="1.8" height="1.6" fill="#1c1c1c"/><rect x="8.4" y="318.8" width="1.8" height="1.6" fill="#1c1c1c"/><rect x="8.4" y="321.7" width="1.8" height="1.6" fill="#1c1c1c"/><rect x="8.4" y="324.6" width="1.8" height="1.6" fill="#1c1c1c"/><rect x="8.4" y="327.5" width="1.8" height="1.6" fill="#1c1c1c"/><rect x="8.4" y="330.4" width="1.8" height="1.6" fill="#1c1c1c"/><rect x="12.3" y="324.6" width="1.8" height="1.6" fill="#1c1c1c"/>
<polygon points="865.2,300.3 889,325.4 865.2,350.4" fill="url(#ghl)"/>
<rect x="869.4" y="314.4" width="1.8" height="1.6" fill="#1c1c1c"/><rect x="869.4" y="317.3" width="1.8" height="1.6" fill="#1c1c1c"/><rect x="869.4" y="320.2" width="1.8" height="1.6" fill="#1c1c1c"/><rect x="869.4" y="323.1" width="1.8" height="1.6" fill="#1c1c1c"/><rect x="869.4" y="326.0" width="1.8" height="1.6" fill="#1c1c1c"/><rect x="869.4" y="328.9" width="1.8" height="1.6" fill="#1c1c1c"/><rect x="869.4" y="331.8" width="1.8" height="1.6" fill="#1c1c1c"/><rect x="869.4" y="334.7" width="1.8" height="1.6" fill="#1c1c1c"/><rect x="874.4" y="318.8" width="1.8" height="1.6" fill="#1c1c1c"/><rect x="874.4" y="321.7" width="1.8" height="1.6" fill="#1c1c1c"/><rect x="874.4" y="324.6" width="1.8" height="1.6" fill="#1c1c1c"/><rect x="874.4" y="327.5" width="1.8" height="1.6" fill="#1c1c1c"/><rect x="874.4" y="330.4" width="1.8" height="1.6" fill="#1c1c1c"/><rect x="878.3" y="324.6" width="1.8" height="1.6" fill="#1c1c1c"/>
</svg>

</div>
</body>
</html>
